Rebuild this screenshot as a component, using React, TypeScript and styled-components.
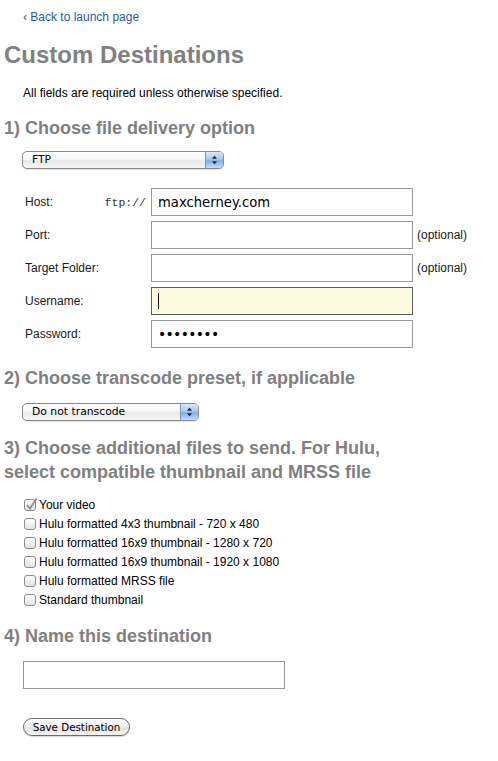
import React from "react";
import styled, { createGlobalStyle } from "styled-components";

const Global = createGlobalStyle`
  html, body { margin: 0; padding: 0; background: #fff; }
  body { font-family: "Liberation Sans", Arial, sans-serif; color: #000; }
`;

const Page = styled.div`
  padding: 10px 0 20px 4px;
  width: 498px;
  box-sizing: border-box;
`;

const BackLink = styled.a`
  display: block;
  margin-left: 19px;
  font-size: 12px;
  line-height: 14px;
  color: #1e5da6;
  text-decoration: none;
`;

const Title = styled.h1`
  margin: 17px 0 0;
  font-size: 24px;
  line-height: 28px;
  font-weight: bold;
  color: #808080;
`;

const Note = styled.p`
  margin: 17px 0 0 19px;
  font-size: 12px;
  line-height: 14px;
`;

const Step = styled.h2<{ $mt: number }>`
  margin: ${(p) => p.$mt}px 0 0;
  font-size: 18px;
  line-height: 24px;
  font-weight: bold;
  color: #808080;
`;

const Indent = styled.div<{ $mt: number }>`
  margin: ${(p) => p.$mt}px 0 0 18px;
`;

const SelectBox = styled.div<{ $w: number }>`
  display: flex;
  align-items: stretch;
  width: ${(p) => p.$w}px;
  height: 18px;
  box-sizing: border-box;
  border: 1px solid #8a8a8a;
  border-radius: 5px;
  overflow: hidden;
  background: linear-gradient(#ffffff, #f6f6f6 45%, #e9e9e9 55%, #f7f7f7);
  box-shadow: 0 1px 1px rgba(0, 0, 0, 0.12);
`;

const SelectText = styled.span`
  flex: 1;
  padding-left: 9px;
  font-family: "DejaVu Sans", sans-serif;
  font-size: 10.8px;
  line-height: 16px;
  color: #000;
`;

const Stepper = styled.span`
  width: 17px;
  display: flex;
  align-items: center;
  justify-content: center;
  border-left: 1px solid #7d95b6;
  background: linear-gradient(#d9e8f8, #a9c8ee 45%, #7fb0e8 55%, #c4ddf7);
`;

const FormGrid = styled.div`
  display: grid;
  grid-template-columns: 78px 48px 262px auto;
  row-gap: 5px;
  margin: 19px 0 0 21px;
  align-items: center;
`;

const Label = styled.span`
  font-size: 12px;
  line-height: 14px;
  color: #1a1a1a;
`;

const Prefix = styled.span`
  font-family: "Liberation Mono", monospace;
  font-size: 11.5px;
  text-align: right;
  padding-right: 5px;
  color: #333;
`;

const TextField = styled.input<{ $focus?: boolean }>`
  box-sizing: border-box;
  width: 262px;
  height: 28px;
  margin: 0;
  padding: 0 6px;
  border: 1px solid ${(p) => (p.$focus ? "#5c5c5c" : "#9a9a9a")};
  border-radius: 0;
  outline: none;
  font-family: "DejaVu Sans", sans-serif;
  font-size: 13.2px;
  color: #000;
  background: ${(p) =>
    p.$focus
      ? "linear-gradient(#000, #000) no-repeat 6px 5px / 1px 16px, #fdfbdf"
      : "#fff"};
`;

const Optional = styled.span`
  font-size: 12px;
  padding-left: 4px;
  color: #1a1a1a;
`;

const Dots = styled(TextField)`
  font-size: 14px;
  letter-spacing: -0.7px;
`;

const CheckList = styled.div`
  display: flex;
  flex-direction: column;
  margin: 11px 0 0 20px;
`;

const CheckRow = styled.label`
  display: flex;
  align-items: center;
  height: 19px;
  font-size: 12px;
  color: #000;
  gap: 3px;
`;

const Box = styled.span`
  position: relative;
  width: 12px;
  height: 12px;
  box-sizing: border-box;
  border: 1px solid #8b8b8b;
  border-radius: 3px;
  background: linear-gradient(#ffffff, #f1f1f1 50%, #e2e2e2);
  box-shadow: inset 0 1px 0 #fff;
`;

const Tick = styled.svg`
  position: absolute;
  left: 0;
  top: -3px;
`;

const NameField = styled(TextField)`
  margin: 13px 0 0 19px;
`;

const SaveButton = styled.button`
  display: block;
  margin: 29px 0 0 19px;
  width: 107px;
  height: 18px;
  padding: 0;
  box-sizing: border-box;
  border: 1px solid #6a6a6a;
  border-radius: 9px;
  background: linear-gradient(#ffffff, #f4f4f4 45%, #e2e2e2 55%, #f6f6f6);
  font-family: "DejaVu Sans", sans-serif;
  font-size: 10.3px;
  line-height: 16px;
  color: #000;
  box-shadow: 0 1px 1px rgba(0, 0, 0, 0.15);
`;

function Select({ value, width }: { value: string; width: number }) {
  return (
    <SelectBox $w={width}>
      <SelectText>{value}</SelectText>
      <Stepper>
        <svg width="7" height="10" viewBox="0 0 7 10">
          <path d="M3.5 0.5 L6 3.8 L1 3.8 Z" fill="#1b2a3f" />
          <path d="M3.5 9.5 L6 6.2 L1 6.2 Z" fill="#1b2a3f" />
        </svg>
      </Stepper>
    </SelectBox>
  );
}

function Check({ label, checked }: { label: string; checked?: boolean }) {
  return (
    <CheckRow>
      <Box>
        {checked && (
          <Tick width="13" height="14" viewBox="0 0 13 14">
            <path
              d="M2 8 L5 11.5 L11.5 1.5"
              fill="none"
              stroke="#8e8e8e"
              strokeWidth="1.8"
            />
          </Tick>
        )}
      </Box>
      {label}
    </CheckRow>
  );
}

export default function App() {
  return (
    <Page>
      <Global />
      <BackLink href="#">‹ Back to launch page</BackLink>
      <Title>Custom Destinations</Title>
      <Note>All fields are required unless otherwise specified.</Note>

      <Step $mt={16}>1) Choose file delivery option</Step>
      <Indent $mt={11}>
        <Select value="FTP" width={202} />
      </Indent>

      <FormGrid>
        <Label>Host:</Label>
        <Prefix>ftp://</Prefix>
        <TextField readOnly value="maxcherney.com" />
        <span />

        <Label>Port:</Label>
        <span />
        <TextField readOnly value="" />
        <Optional>(optional)</Optional>

        <Label>Target Folder:</Label>
        <span />
        <TextField readOnly value="" />
        <Optional>(optional)</Optional>

        <Label>Username:</Label>
        <span />
        <TextField readOnly value="" $focus />
        <span />

        <Label>Password:</Label>
        <span />
        <Dots readOnly value="••••••••" />
        <span />
      </FormGrid>

      <Step $mt={18}>2) Choose transcode preset, if applicable</Step>
      <Indent $mt={13}>
        <Select value="Do not transcode" width={177} />
      </Indent>

      <Step $mt={15}>
        3) Choose additional files to send. For Hulu,
        <br />
        select compatible thumbnail and MRSS file
      </Step>
      <CheckList>
        <Check label="Your video" checked />
        <Check label="Hulu formatted 4x3 thumbnail - 720 x 480" />
        <Check label="Hulu formatted 16x9 thumbnail - 1280 x 720" />
        <Check label="Hulu formatted 16x9 thumbnail - 1920 x 1080" />
        <Check label="Hulu formatted MRSS file" />
        <Check label="Standard thumbnail" />
      </CheckList>

      <Step $mt={15}>4) Name this destination</Step>
      <NameField readOnly value="" />
      <SaveButton>Save Destination</SaveButton>
    </Page>
  );
}
